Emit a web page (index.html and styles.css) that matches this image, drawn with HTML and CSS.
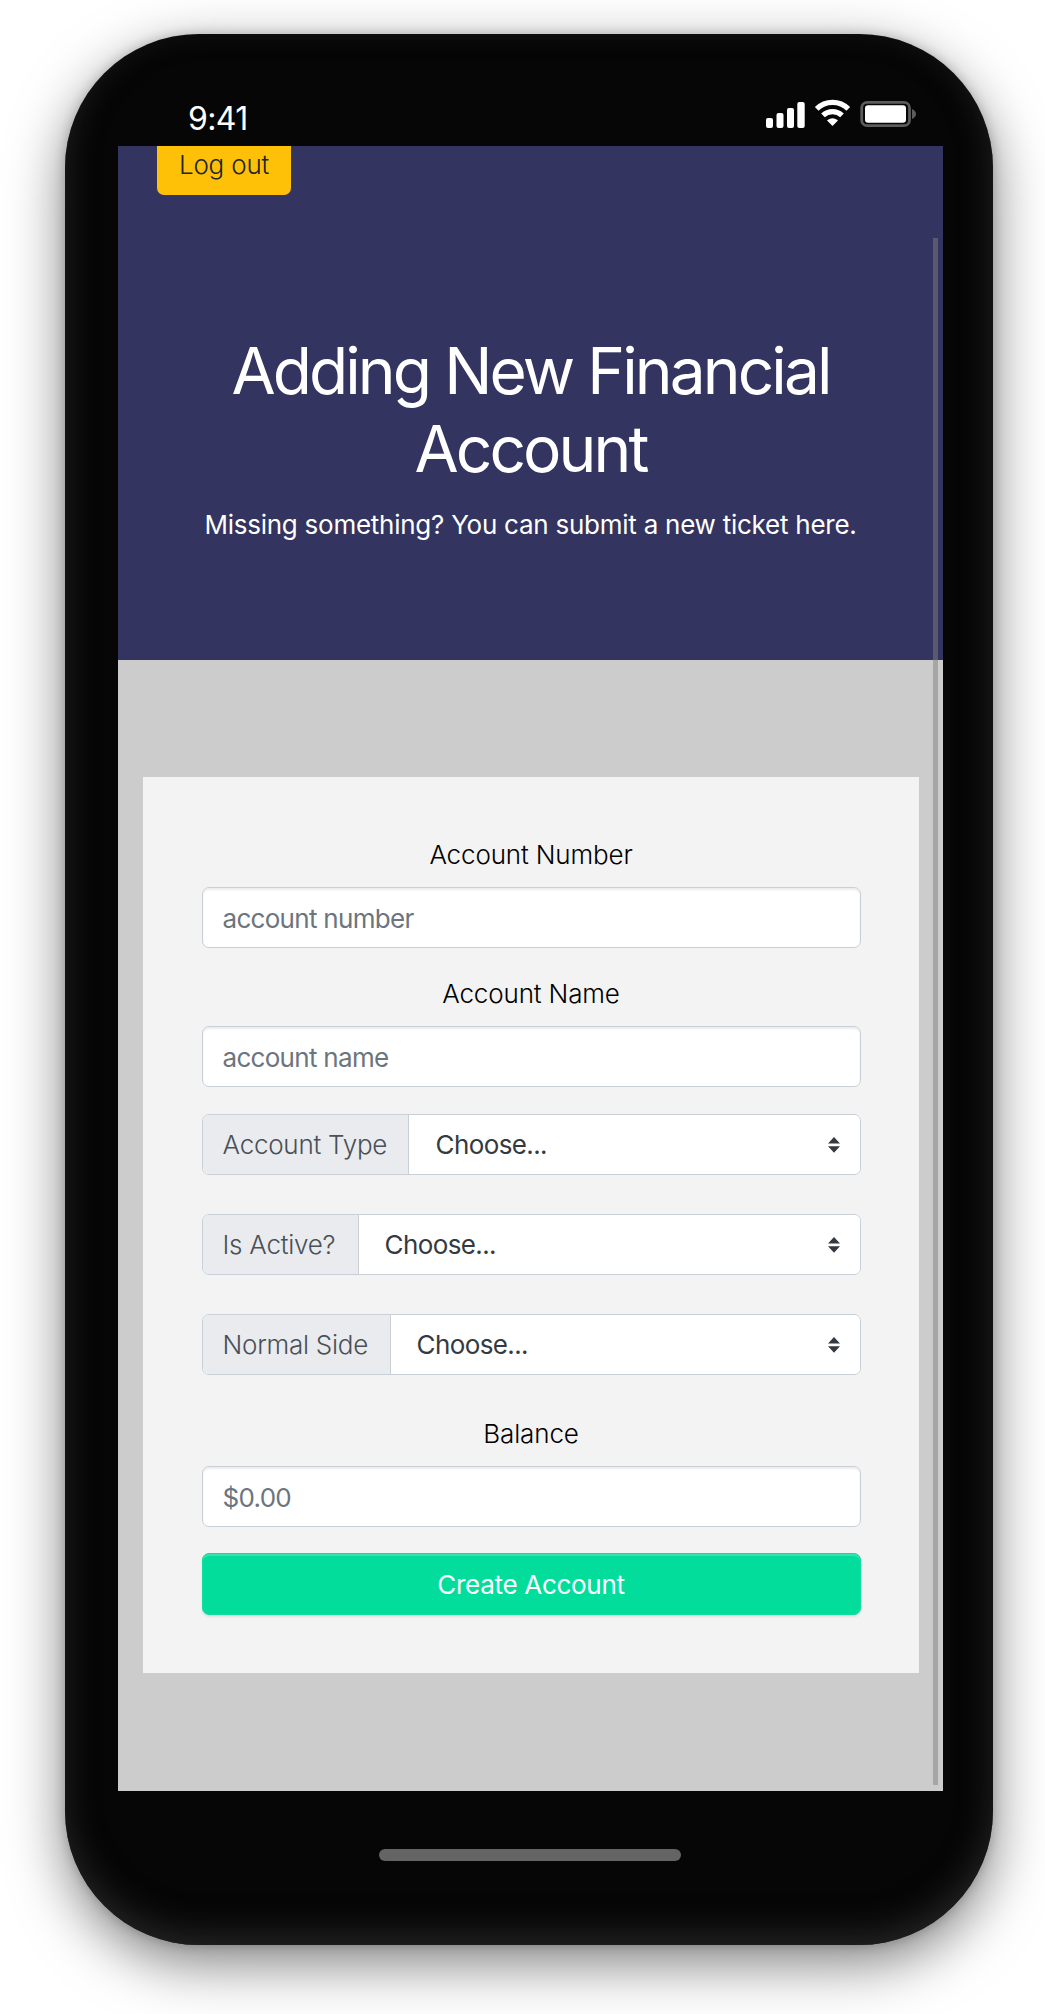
FILE: index.html
```html
<!DOCTYPE html>
<html lang="en">
<head>
<meta charset="utf-8">
<title>Adding New Financial Account</title>
<link rel="stylesheet" href="styles.css">
</head>
<body>
<div class="phone">
  <div class="status">
    <span class="time">9:41</span>
    <svg class="indicators" width="154" height="32" viewBox="0 0 154 32">
      <g fill="#fff">
        <rect x="3" y="20" width="7" height="10" rx="2"/>
        <rect x="13.5" y="15" width="7" height="15" rx="2"/>
        <rect x="24" y="10" width="7" height="20" rx="2"/>
        <rect x="34.3" y="4" width="7.4" height="26" rx="2"/>
        <path d="M69.500 28 L64.300 22.800 Q64 22.300 64.500 22 Q69.500 18.500 74.500 22 Q75 22.300 74.700 22.800 Z"/>
      </g>
      <g fill="none" stroke="#fff" stroke-width="5.200">
        <path d="M53.700 10.900 A22.500 22.500 0 0 1 85.300 10.900"/>
        <path d="M60 17.400 A13.700 13.700 0 0 1 79 17.400"/>
      </g>
      <rect x="98.700" y="4.300" width="47.800" height="23.400" rx="5.500" fill="none" stroke="#5c5c5c" stroke-width="2.800"/>
      <rect x="102" y="7.300" width="41" height="17.500" rx="3" fill="#fff"/>
      <path d="M149 11 Q153 13 153 16 Q153 19 149 21 Z" fill="#5c5c5c"/>
    </svg>
  </div>
  <main class="screen">
    <header class="hero">
      <button class="logout"><span>Log out</span></button>
      <h1 class="title">Adding New Financial<br>Account</h1>
      <p class="subtitle">Missing something? You can submit a new ticket here.</p>
    </header>
    <form class="card">
      <label class="label" for="number">Account Number</label>
      <input class="input first" id="number" placeholder="account number">
      <label class="label" for="name">Account Name</label>
      <input class="input second" id="name" placeholder="account name">
      <div class="group type">
        <label class="addon" for="type">Account Type</label>
        <select class="select" id="type"><option>Choose...</option></select>
        <svg class="caret" width="12" height="16" viewBox="0 0 12 16"><path d="M6 0 12 6.500H0ZM0 9.300H12L6 15.800Z" fill="#343a40"/></svg>
      </div>
      <div class="group active">
        <label class="addon" for="active">Is Active?</label>
        <select class="select" id="active"><option>Choose...</option></select>
        <svg class="caret" width="12" height="16" viewBox="0 0 12 16"><path d="M6 0 12 6.500H0ZM0 9.300H12L6 15.800Z" fill="#343a40"/></svg>
      </div>
      <div class="group side">
        <label class="addon" for="side">Normal Side</label>
        <select class="select" id="side"><option>Choose...</option></select>
        <svg class="caret" width="12" height="16" viewBox="0 0 12 16"><path d="M6 0 12 6.500H0ZM0 9.300H12L6 15.800Z" fill="#343a40"/></svg>
      </div>
      <label class="label" for="balance">Balance</label>
      <input class="input third" id="balance" placeholder="$0.00">
      <button class="create" type="button">Create Account</button>
    </form>
    <div class="scrollbar"></div>
  </main>
  <div class="home"></div>
</div>
</body>
</html>
```
FILE: styles.css
```css
* { box-sizing: border-box; }
body {
  margin: 0;
  height: 2014px;
  overflow: hidden;
  padding: 34px 0 0 65px;
  background: #fff;
  font-family: Inter, "Liberation Sans", sans-serif;
  font-size: 26px;
}
.phone {
  width: 928px;
  height: 1911px;
  padding: 0 49px 0 53px;
  border-radius: 134px;
  background: #060606;
  box-shadow: 0 18px 56px rgba(0, 0, 0, .5), 0 0 12px rgba(0, 0, 0, .2), inset 0 -12px 32px #242424;
}
.status {
  height: 112px;
  padding: 64px 27px 0 70px;
  display: flex;
  justify-content: space-between;
  align-items: flex-start;
  color: #fff;
}
.time {
  font-size: 32px;
  font-weight: 420;
  line-height: 41px;
  letter-spacing: -.6px;
}
.indicators { flex: none; }
.screen {
  position: relative;
  width: 825px;
  height: 1645px;
  background: #ccc;
  overflow: hidden;
}
.hero {
  display: flow-root;
  height: 514px;
  background: #333460;
  color: #fff;
  text-align: center;
}
.logout {
  display: block;
  width: 134px;
  height: 61px;
  margin: -12px 0 0 39px;
  padding: 0;
  border: 0;
  border-radius: 7px;
  background: #ffc107;
  color: #212529;
  font: 300 26px/61px Inter, sans-serif;
  letter-spacing: -.2px;
}
.title {
  margin: 137px 0 0;
  font-size: 64px;
  font-weight: 430;
  line-height: 77.500px;
  letter-spacing: -2.900px;
}
.subtitle {
  margin: 18px 0 0;
  font-size: 26px;
  line-height: 39px;
  letter-spacing: -.25px;
}
.card {
  width: 776px;
  height: 896px;
  margin: 117px 0 0 25px;
  padding: 59px 58.500px 0;
  background: #f3f3f3;
  display: flex;
  flex-direction: column;
}
.label {
  height: 39px;
  margin-bottom: 12px;
  text-align: center;
  font-weight: 300;
  line-height: 38px;
  letter-spacing: -.15px;
  color: #000;
}
.input {
  height: 61px;
  flex: none;
  padding: 1px 20px 0;
  border: 1.500px solid #c8cfd6;
  border-radius: 7px;
  background: #fff;
  box-shadow: inset 0 2px 2px rgba(0, 0, 0, .075);
  font: 420 26px/39px Inter, sans-serif;
  letter-spacing: -.7px;
}
.input::placeholder { color: #6c757d; opacity: 1; }
.first { margin-bottom: 27px; }
.second { margin-bottom: 27px; }
.third { margin-bottom: 26px; }
.group {
  position: relative;
  display: flex;
  flex: none;
  height: 61px;
  margin-bottom: 39px;
  border: 1.500px solid #c8cfd6;
  border-radius: 7px;
  background: #fff;
  overflow: hidden;
}
.side { margin-bottom: 40px; }
.addon {
  width: 206px;
  padding-left: 20px;
  border-right: 1.500px solid #c8cfd6;
  background: #e9ebee;
  color: #495057;
  font-weight: 340;
  line-height: 60px;
  letter-spacing: -.25px;
  white-space: nowrap;
}
.active .addon { width: 156px; }
.side .addon { width: 188px; }
.select {
  flex: 1;
  appearance: none;
  border: 0;
  padding: 1px 0 0 26px;
  background: #fff;
  color: #343a40;
  font: 400 26px/58px Inter, sans-serif;
  letter-spacing: -.6px;
}
.type .select { padding-left: 27px; }
.caret {
  position: absolute;
  right: 20px;
  top: 22px;
}
.create {
  height: 62px;
  flex: none;
  border: 1.500px solid #12dda0;
  border-radius: 7px;
  background: #02dd9c;
  color: #fff;
  box-shadow: inset 0 2px 0 rgba(255, 255, 255, .2), 0 2px 2px rgba(0, 0, 0, .075);
  font: 400 26px/39px Inter, sans-serif;
  letter-spacing: -.3px;
}
.scrollbar {
  position: absolute;
  right: 5px;
  top: 92px;
  width: 5px;
  height: 1547px;
  background: rgba(128, 128, 128, .5);
}
.home {
  width: 302px;
  height: 12px;
  margin: 58px 0 0 261px;
  border-radius: 6px;
  background: #646464;
}
```
